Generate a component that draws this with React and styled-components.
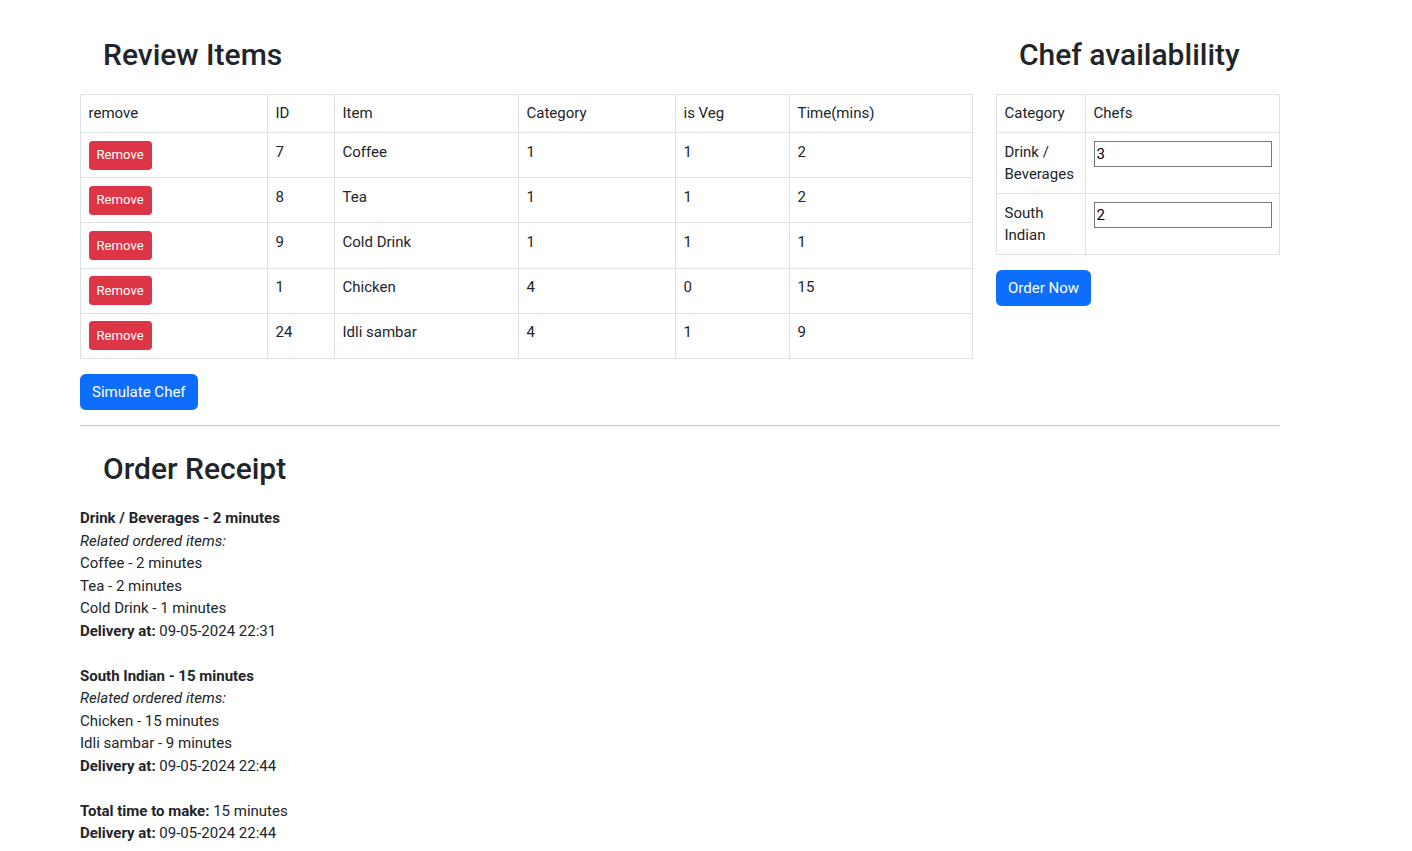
import styled, { createGlobalStyle } from "styled-components";

const GlobalStyle = createGlobalStyle`
  * { box-sizing: border-box; }
  body {
    margin: 0;
    font-family: "Segoe UI", Roboto, "Liberation Sans", sans-serif;
    font-size: 15px;
    line-height: 1.5;
    color: #212529;
    background: #fff;
  }
`;

const items = [
  { id: 7, name: "Coffee", category: 1, veg: 1, time: 2 },
  { id: 8, name: "Tea", category: 1, veg: 1, time: 2 },
  { id: 9, name: "Cold Drink", category: 1, veg: 1, time: 1 },
  { id: 1, name: "Chicken", category: 4, veg: 0, time: 15 },
  { id: 24, name: "Idli sambar", category: 4, veg: 1, time: 9 },
];

const chefs = [
  { category: "Drink / Beverages", count: "3" },
  { category: "South Indian", count: "2" },
];

const receipt = [
  {
    title: "Drink / Beverages - 2 minutes",
    lines: ["Coffee - 2 minutes", "Tea - 2 minutes", "Cold Drink - 1 minutes"],
    delivery: "09-05-2024 22:31",
  },
  {
    title: "South Indian - 15 minutes",
    lines: ["Chicken - 15 minutes", "Idli sambar - 9 minutes"],
    delivery: "09-05-2024 22:44",
  },
];

export default function App() {
  return (
    <>
      <GlobalStyle />
      <Page>
        <TopRow>
          <LeftCol>
            <Heading>Review Items</Heading>
            <Table>
              <colgroup>
                <col style={{ width: 187 }} />
                <col style={{ width: 67 }} />
                <col style={{ width: 184 }} />
                <col style={{ width: 157 }} />
                <col style={{ width: 114 }} />
                <col />
              </colgroup>
              <thead>
                <tr>
                  <Cell as="th">remove</Cell>
                  <Cell as="th">ID</Cell>
                  <Cell as="th">Item</Cell>
                  <Cell as="th">Category</Cell>
                  <Cell as="th">is Veg</Cell>
                  <Cell as="th">Time(mins)</Cell>
                </tr>
              </thead>
              <tbody>
                {items.map((it) => (
                  <tr key={it.id}>
                    <Cell>
                      <Button $variant="danger" $small>
                        Remove
                      </Button>
                    </Cell>
                    <Cell>{it.id}</Cell>
                    <Cell>{it.name}</Cell>
                    <Cell>{it.category}</Cell>
                    <Cell>{it.veg}</Cell>
                    <Cell>{it.time}</Cell>
                  </tr>
                ))}
              </tbody>
            </Table>
            <Button>Simulate Chef</Button>
          </LeftCol>

          <RightCol>
            <Heading>Chef availablility</Heading>
            <Table>
              <colgroup>
                <col style={{ width: 89 }} />
                <col />
              </colgroup>
              <thead>
                <tr>
                  <Cell as="th">Category</Cell>
                  <Cell as="th">Chefs</Cell>
                </tr>
              </thead>
              <tbody>
                {chefs.map((c) => (
                  <tr key={c.category}>
                    <Cell>{c.category}</Cell>
                    <Cell>
                      <ChefInput defaultValue={c.count} />
                    </Cell>
                  </tr>
                ))}
              </tbody>
            </Table>
            <Button>Order Now</Button>
          </RightCol>
        </TopRow>

        <Rule />

        <Heading>Order Receipt</Heading>
        {receipt.map((g) => (
          <Group key={g.title}>
            <Bold>{g.title}</Bold>
            <Italic>Related ordered items:</Italic>
            {g.lines.map((l) => (
              <Line key={l}>{l}</Line>
            ))}
            <Line>
              <Bold as="span">Delivery at:</Bold> {g.delivery}
            </Line>
          </Group>
        ))}
        <Group>
          <Line>
            <Bold as="span">Total time to make:</Bold> 15 minutes
          </Line>
          <Line>
            <Bold as="span">Delivery at:</Bold> 09-05-2024 22:44
          </Line>
        </Group>
      </Page>
    </>
  );
}

const Page = styled.div`
  width: 1200px;
  margin-left: 80px;
  padding-top: 37px;
`;

const TopRow = styled.div`
  display: flex;
  gap: 23px;
  align-items: flex-start;
`;

const LeftCol = styled.div`
  width: 893px;
`;

const RightCol = styled.div`
  width: 284px;
`;

const Heading = styled.h2`
  margin: 0 0 20.5px;
  padding-left: 23px;
  font-size: 30px;
  font-weight: 500;
  line-height: 1.2;
`;

const Table = styled.table`
  width: 100%;
  border-collapse: collapse;
  table-layout: fixed;
  margin-bottom: 15px;
  vertical-align: top;
`;

const Cell = styled.td`
  padding: 7.5px;
  border: 1px solid #dee2e6;
  text-align: left;
  font-weight: 400;
  vertical-align: top;
`;

const Button = styled.button`
  display: inline-block;
  border: 1px solid transparent;
  color: #fff;
  font-family: inherit;
  cursor: pointer;
  background: ${(p) => (p.$variant === "danger" ? "#dc3545" : "#0d6efd")};
  font-size: ${(p) => (p.$small ? "13.125px" : "15px")};
  line-height: 1.5;
  padding: ${(p) => (p.$small ? "3.75px 7px" : "5.6px 11px")};
  border-radius: ${(p) => (p.$small ? "3.75px" : "5.6px")};
`;

const ChefInput = styled.input`
  width: 178px;
  font-family: inherit;
  font-size: 15px;
  line-height: 1.5;
  padding: 1px 2px;
  border: 1px solid #767676;
  border-radius: 0;
  color: #000;
`;

const Rule = styled.hr`
  margin: 15px 0 25px;
  border: 0;
  border-top: 1px solid #c8c9ca;
`;

const Group = styled.div`
  margin-bottom: 22.5px;
`;

const Line = styled.div``;

const Bold = styled.div`
  font-weight: 700;
`;

const Italic = styled.div`
  font-style: italic;
`;
